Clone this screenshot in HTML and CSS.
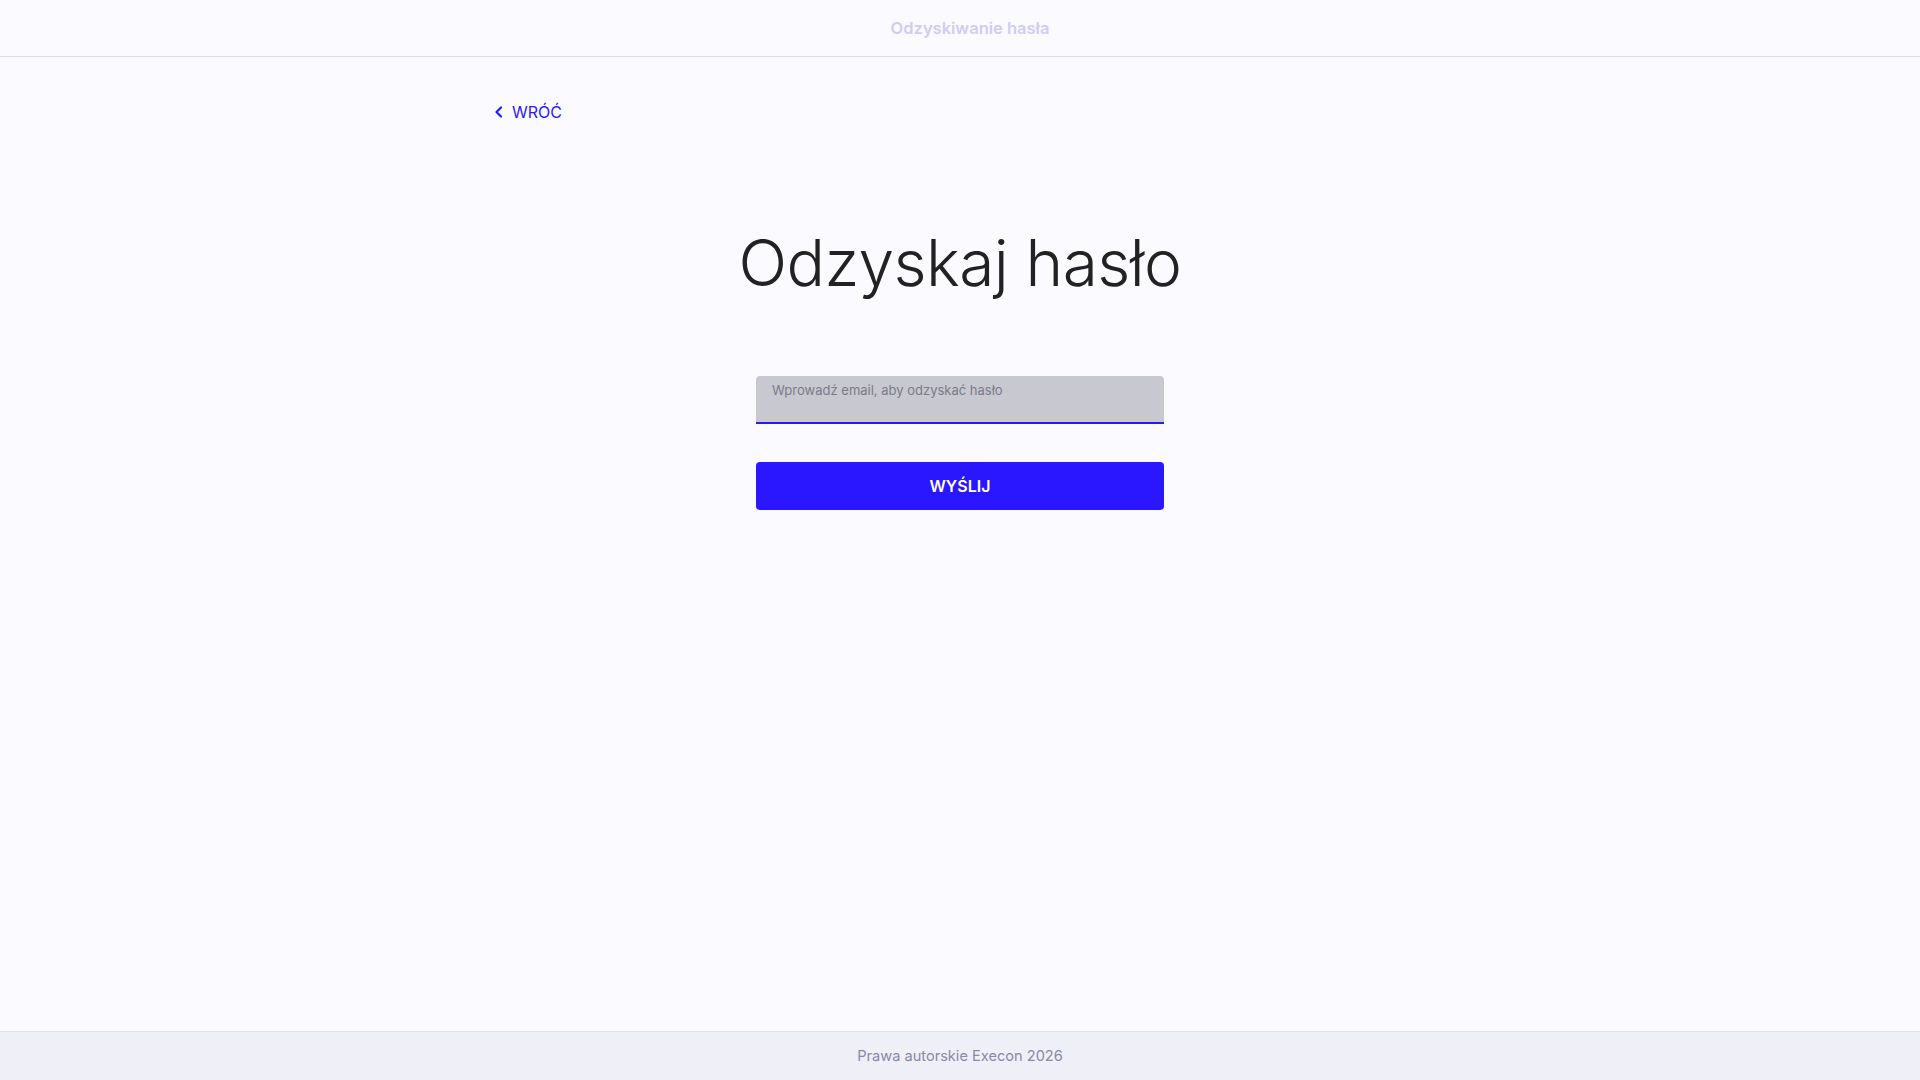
FILE: index.html
```html
<!DOCTYPE html>
<html lang="pl">
<head>
<meta charset="utf-8">
<title>Odzyskiwanie hasła</title>
<link rel="stylesheet" href="styles.css">
</head>
<body>
<div class="page">
  <header class="topbar">
    <span class="topbar-title">Odzyskiwanie hasła</span>
  </header>
  <main class="main">
    <div class="container">
      <a class="back" href="#">
        <svg class="back-icon" width="10" height="12" viewBox="0 0 10 12" aria-hidden="true">
          <path d="M7 1.5 L2.5 6 L7 10.5" fill="none" stroke="currentColor" stroke-width="2.2" stroke-linecap="round" stroke-linejoin="round"/>
        </svg>
        <span>WRÓĆ</span>
      </a>
      <h1 class="title">Odzyskaj hasło</h1>
      <form class="form">
        <label class="field">
          <span class="field-label">Wprowadź email, aby odzyskać hasło</span>
          <input class="field-input" type="email">
        </label>
        <button class="submit" type="button">WYŚLIJ</button>
      </form>
    </div>
  </main>
  <footer class="footer">Prawa autorskie Execon 2026</footer>
</div>
</body>
</html>
```

FILE: styles.css
```css
* { box-sizing: border-box; }
html, body { margin: 0; padding: 0; }
body {
  font-family: "Inter", "Noto Sans", sans-serif;
  background: #fbfbff;
  color: #222;
}
.page {
  min-height: 100vh;
  display: flex;
  flex-direction: column;
}
.topbar {
  height: 57px;
  border-bottom: 1px solid #dedbf6;
  background: #fbfaff;
  display: flex;
  align-items: center;
  justify-content: center;
  padding-left: 20px;
}
.topbar-title {
  font-size: 16.5px;
  font-weight: 600;
  color: #cfcdf2;
}
.main { flex: 1; }
.container {
  width: 932px;
  margin: 0 auto;
  padding-top: 44px;
}
.back {
  display: inline-flex;
  align-items: center;
  gap: 8px;
  color: #2a16ff;
  text-decoration: none;
  font-size: 16px;
  font-weight: 400;
  height: 22px;
}
.back-icon { display: block; }
.title {
  margin: 102px 0 0;
  text-align: center;
  font-size: 64px;
  font-weight: 350;
  line-height: 76px;
  color: #222;
  letter-spacing: -0.6px;
}
.form {
  width: 408px;
  margin: 75px auto 0;
  display: flex;
  flex-direction: column;
  gap: 38px;
}
.field {
  position: relative;
  display: block;
  height: 48px;
  background: #c8c8d0;
  border-radius: 4px 4px 0 0;
  border-bottom: 2px solid #2a16ff;
}
.field-label {
  position: absolute;
  left: 16px;
  top: 6px;
  font-size: 13px;
  color: #7b7a8a;
}
.field-input {
  width: 100%;
  height: 100%;
  border: 0;
  background: transparent;
  outline: none;
  padding: 20px 16px 4px;
  font: inherit;
}
.submit {
  height: 48px;
  border: 0;
  border-radius: 4px;
  background: #2a16ff;
  color: #fff;
  font-family: inherit;
  font-size: 16px;
  font-weight: 600;
  cursor: pointer;
}
.footer {
  height: 49px;
  border-top: 1px solid #e0def0;
  background: #efeff8;
  display: flex;
  align-items: center;
  justify-content: center;
  font-size: 14.6px;
  color: #8a88a6;
}
```
